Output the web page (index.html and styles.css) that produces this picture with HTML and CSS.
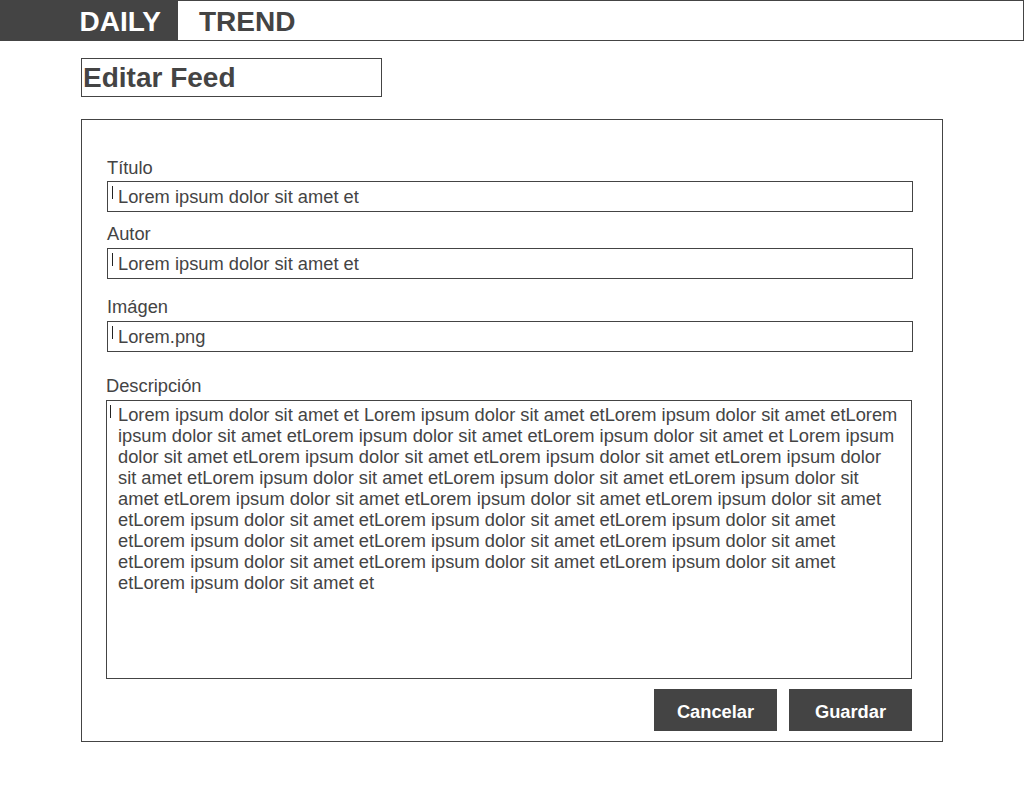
FILE: index.html
```html
<!DOCTYPE html>
<html lang="es">
<head>
<meta charset="utf-8">
<title>Editar Feed</title>
<link rel="stylesheet" href="styles.css">
</head>
<body>
<header class="topbar">
  <div class="brand-dark">DAILY</div>
  <div class="brand-light">TREND</div>
</header>
<main class="main">
  <h1 class="page-title">Editar Feed</h1>
  <section class="form-card">
    <div class="field field-titulo">
      <div class="label">Título</div>
      <div class="input"><span class="caret"></span>Lorem ipsum dolor sit amet et</div>
    </div>
    <div class="field field-autor">
      <div class="label">Autor</div>
      <div class="input"><span class="caret"></span>Lorem ipsum dolor sit amet et</div>
    </div>
    <div class="field field-imagen">
      <div class="label">Imágen</div>
      <div class="input"><span class="caret"></span>Lorem.png</div>
    </div>
    <div class="field field-desc">
      <div class="label">Descripción</div>
      <div class="textarea"><span class="caret caret-area"></span><p class="area-text">Lorem ipsum dolor sit amet et Lorem ipsum dolor sit amet etLorem ipsum dolor sit amet etLorem ipsum dolor sit amet etLorem ipsum dolor sit amet etLorem ipsum dolor sit amet et Lorem ipsum dolor sit amet etLorem ipsum dolor sit amet etLorem ipsum dolor sit amet etLorem ipsum dolor sit amet etLorem ipsum dolor sit amet etLorem ipsum dolor sit amet etLorem ipsum dolor sit amet etLorem ipsum dolor sit amet etLorem ipsum dolor sit amet etLorem ipsum dolor sit amet etLorem ipsum dolor sit amet etLorem ipsum dolor sit amet etLorem ipsum dolor sit amet etLorem ipsum dolor sit amet etLorem ipsum dolor sit amet etLorem ipsum dolor sit amet etLorem ipsum dolor sit amet etLorem ipsum dolor sit amet etLorem ipsum dolor sit amet etLorem ipsum dolor sit amet et</p></div>
    </div>
    <div class="actions">
      <button class="btn" type="button">Cancelar</button>
      <button class="btn" type="button">Guardar</button>
    </div>
  </section>
</main>
</body>
</html>
```
FILE: styles.css
```css
* { box-sizing: border-box; }
html, body { margin: 0; padding: 0; background: #fff; }
body {
  font-family: "Liberation Sans", Arial, sans-serif;
  color: #444;
}
.topbar {
  display: flex;
  height: 41px;
  border: 1px solid #444;
}
.brand-dark {
  width: 178px;
  height: 41px;
  margin: -1px 0 -1px -1px;
  background: #444;
  color: #fff;
  font-weight: bold;
  font-size: 28px;
  line-height: 43px;
  text-align: right;
  padding-right: 17px;
}
.brand-light {
  padding-left: 21px;
  font-weight: bold;
  font-size: 28px;
  line-height: 41px;
  color: #444;
}
.main {
  padding-left: 81px;
}
.page-title {
  margin: 17px 0 0 0;
  width: 301px;
  height: 39px;
  border: 1px solid #444;
  font-size: 28px;
  font-weight: bold;
  line-height: 37px;
  padding-left: 1px;
}
.form-card {
  margin-top: 22px;
  width: 862px;
  height: 623px;
  border: 1px solid #444;
  padding: 37px 29px 0 25px;
  display: flex;
  flex-direction: column;
}
.label {
  font-size: 18.3px;
  line-height: 21px;
  height: 21px;
  margin-bottom: 4px;
}
.field-titulo .label { margin-bottom: 3px; }
.input {
  height: 31px;
  border: 1px solid #444;
  font-size: 18.3px;
  line-height: 29px;
  padding-left: 10px;
  position: relative;
  white-space: nowrap;
}
.caret {
  position: absolute;
  left: 4px;
  top: 4px;
  width: 1px;
  height: 13px;
  background: #222;
}
.field-autor { margin-top: 11px; }
.field-imagen { margin-top: 17px; }
.field-desc { margin: 23px 1px 0 -1px; }
.textarea {
  height: 279px;
  border: 1px solid #444;
  position: relative;
  padding: 3px 8px 0 11px;
}
.caret-area { left: 3px; top: 4px; }
.area-text {
  margin: 0;
  font-size: 18.3px;
  line-height: 21px;
}
.actions {
  display: flex;
  justify-content: flex-end;
  gap: 12px;
  margin-top: 10px;
  margin-right: 1px;
}
.btn {
  width: 123px;
  height: 42px;
  background: #444;
  color: #fff;
  border: none;
  border-radius: 0;
  font-family: "Liberation Sans", Arial, sans-serif;
  font-size: 18.3px;
  font-weight: bold;
  padding: 4px 0 0 0;
}
```
